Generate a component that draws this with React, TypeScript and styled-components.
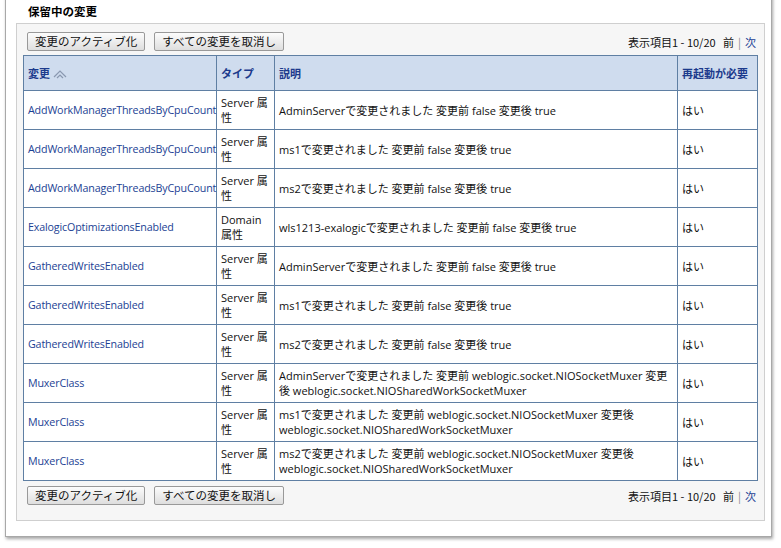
import React from "react";
import styled, { createGlobalStyle } from "styled-components";

const Global = createGlobalStyle`
  html, body { margin: 0; padding: 0; background: #fff; }
  body { font-family: "Open Sans", "Noto Sans CJK JP", sans-serif; font-size: 11px; color: #000; }
`;

const Page = styled.div`
  width: 781px; height: 548px; box-sizing: border-box; padding: 0 9px 5px 5px; background: #fff;
`;
const Panel = styled.div`
  height: 543px; box-sizing: border-box; margin-top: -6px; padding: 10px 6px 0 10px;
  border: 1px solid #a8a8a8; border-top: none; box-shadow: 1px 2px 3px rgba(0,0,0,0.35);
  background: #fff;
`;
const Title = styled.div`
  font-weight: bold; font-size: 11.5px; padding-left: 12px; height: 19px; line-height: 14px;
  font-family: "Noto Sans CJK JP", sans-serif;
`;
const Box = styled.div`
  background: #f6f6f6; border: 1px solid #cfcfcf; padding: 8px 8px 0 6px; height: 498px; box-sizing: border-box;
`;
const Bar = styled.div<{ $top?: boolean }>`
  display: flex; align-items: center; justify-content: space-between; height: 19px;
  margin: ${p => (p.$top ? "0 0 4px" : "5px 0 0")};
`;
const Btns = styled.div` display: flex; gap: 9px; padding-left: 4px; `;
const Btn = styled.button`
  font-family: "Noto Sans CJK JP", sans-serif; font-size: 11.5px; height: 19px; padding: 0 7px;
  border: 1px solid #999; border-radius: 2px; background: linear-gradient(#fcfcfc, #dedede); color: #111;
  line-height: 17px;
`;
const Pager = styled.div`
  font-family: "Noto Sans CJK JP", sans-serif; font-size: 11px; color: #111;
  span.sep { color: #888; margin: 0 4px; }
  a { color: #1c3f94; text-decoration: none; }
`;
const Table = styled.table`
  width: 734px; table-layout: fixed; border-collapse: collapse; border: 1px solid #5f7fa3;
  font-family: "Open Sans", "Noto Sans CJK JP", sans-serif; font-size: 11px;
`;
const Th = styled.th<{ $w: number }>`
  width: ${p => p.$w}px; height: 35px; background: #cfdcee; color: #1c3a8c; text-align: left;
  padding: 0 4px; border: 1px solid #5f7fa3; font-weight: bold; box-sizing: border-box;
  font-family: "Noto Sans CJK JP", sans-serif;
`;
const Td = styled.td<{ $link?: boolean }>`
  height: 38px; padding: 0 4px; border: 1px solid #5f7fa3; background: #fff; line-height: 15px;
  color: ${p => (p.$link ? "#1c3f94" : "#111")};
  font-size: ${p => (p.$link ? "10.7px" : "11px")};
  letter-spacing: ${p => (p.$link ? "-0.15px" : "0")};
  white-space: ${p => (p.$link ? "nowrap" : "normal")};
`;

const rows: [string, string, string][] = [
  ["AddWorkManagerThreadsByCpuCount", "Server 属性", "AdminServerで変更されました 変更前 false 変更後 true"],
  ["AddWorkManagerThreadsByCpuCount", "Server 属性", "ms1で変更されました 変更前 false 変更後 true"],
  ["AddWorkManagerThreadsByCpuCount", "Server 属性", "ms2で変更されました 変更前 false 変更後 true"],
  ["ExalogicOptimizationsEnabled", "Domain 属性", "wls1213-exalogicで変更されました 変更前 false 変更後 true"],
  ["GatheredWritesEnabled", "Server 属性", "AdminServerで変更されました 変更前 false 変更後 true"],
  ["GatheredWritesEnabled", "Server 属性", "ms1で変更されました 変更前 false 変更後 true"],
  ["GatheredWritesEnabled", "Server 属性", "ms2で変更されました 変更前 false 変更後 true"],
  ["MuxerClass", "Server 属性", "AdminServerで変更されました 変更前 weblogic.socket.NIOSocketMuxer 変更後 weblogic.socket.NIOSharedWorkSocketMuxer"],
  ["MuxerClass", "Server 属性", "ms1で変更されました 変更前 weblogic.socket.NIOSocketMuxer 変更後 weblogic.socket.NIOSharedWorkSocketMuxer"],
  ["MuxerClass", "Server 属性", "ms2で変更されました 変更前 weblogic.socket.NIOSocketMuxer 変更後 weblogic.socket.NIOSharedWorkSocketMuxer"],
];

const Sort = () => (
  <svg width="14" height="9" viewBox="0 0 14 9" style={{ marginLeft: 3, verticalAlign: "-1px" }}>
    <path d="M1 7 L7 1 L13 7 M4 8 L7 5 L10 8" fill="none" stroke="#8a98b0" strokeWidth="1.2" />
  </svg>
);

function ActionBar({ top }: { top?: boolean }) {
  return (
    <Bar $top={top}>
      <Btns>
        <Btn>変更のアクティブ化</Btn>
        <Btn>すべての変更を取消し</Btn>
      </Btns>
      <Pager>
        表示項目1 - 10/20&nbsp;&nbsp; 前<span className="sep">|</span><a>次</a>
      </Pager>
    </Bar>
  );
}

export default function App() {
  return (
    <Page>
      <Global />
      <Panel>
        <Title>保留中の変更</Title>
        <Box>
          <ActionBar top />
          <Table>
            <thead>
              <tr>
                <Th $w={193}>変更<Sort /></Th>
                <Th $w={58}>タイプ</Th>
                <Th $w={403}>説明</Th>
                <Th $w={80}>再起動が必要</Th>
              </tr>
            </thead>
            <tbody>
              {rows.map((r, i) => (
                <tr key={i}>
                  <Td $link>{r[0]}</Td>
                  <Td>{r[1]}</Td>
                  <Td>{r[2]}</Td>
                  <Td>はい</Td>
                </tr>
              ))}
            </tbody>
          </Table>
          <ActionBar />
        </Box>
      </Panel>
    </Page>
  );
}
